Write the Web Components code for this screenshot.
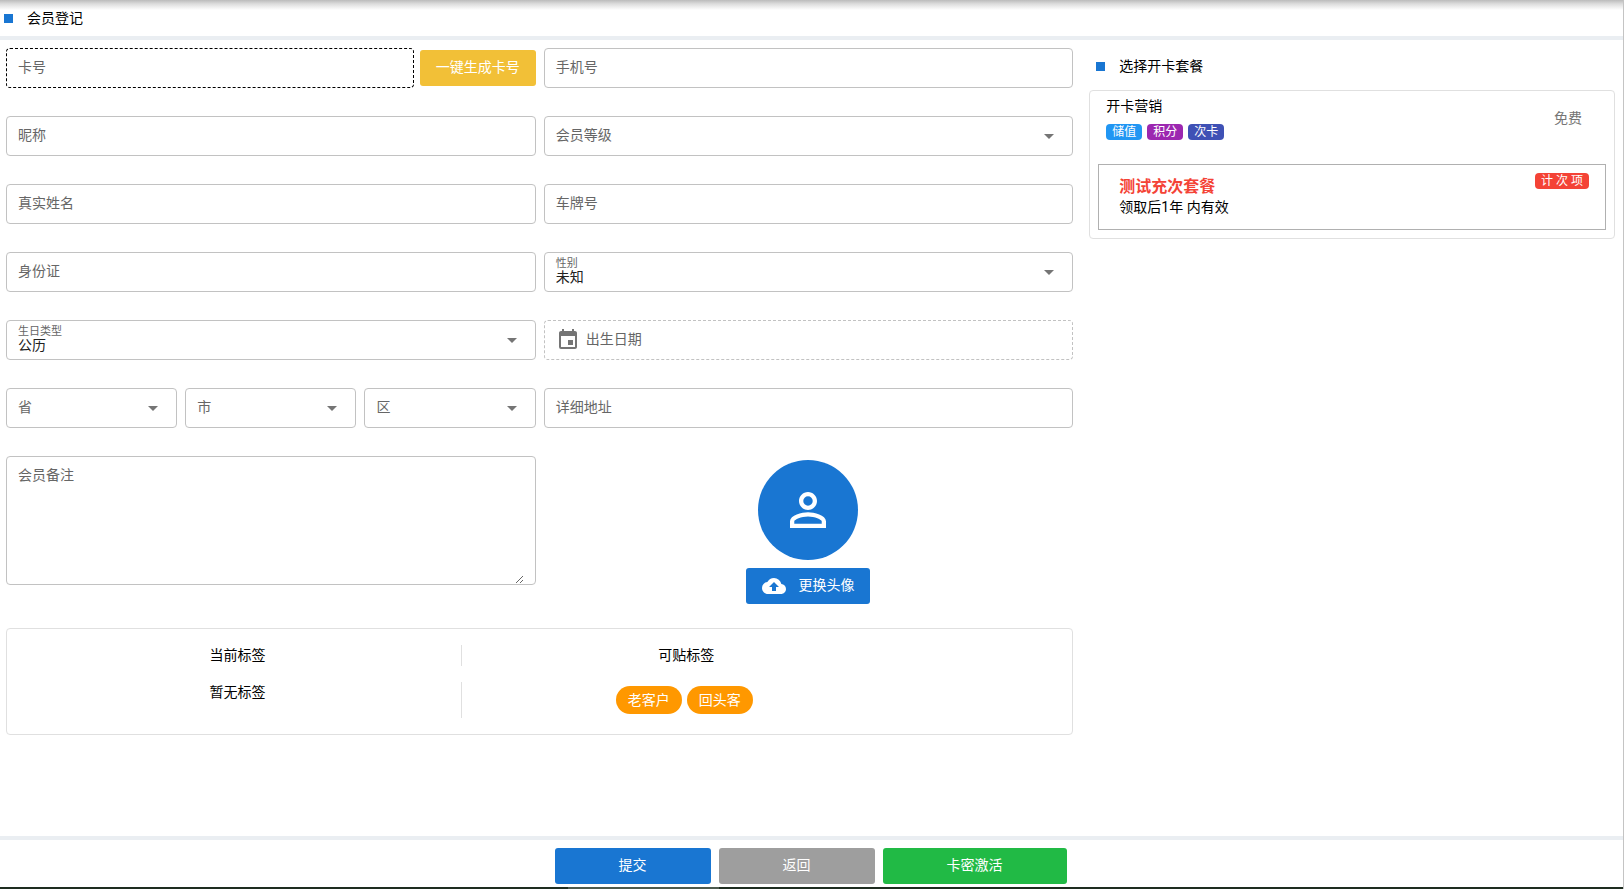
<!DOCTYPE html>
<html lang="zh-CN">
<head>
<meta charset="utf-8">
<meta name="viewport" content="width=device-width, initial-scale=1">
<title>会员登记</title>
<style>
  body { margin: 0; background: #fff; color: #000; font: 14px/20px Roboto, "Noto Sans CJK SC", sans-serif; }
</style>
</head>
<body>
<member-page></member-page>

<script>
const define = (name, markup, setup) => {
  const template = document.createElement('template');
  template.innerHTML = '<style>*, *::before, *::after { box-sizing: border-box; }</style>' + markup;
  customElements.define(name, class extends HTMLElement {
    constructor() {
      super();
      this.attachShadow({ mode: 'open' }).append(template.content.cloneNode(true));
    }
    connectedCallback() { if (setup) setup(this, this.shadowRoot); }
  });
};

// Shared look of the outlined fields
const fieldStyle = `
  :host { display: block; flex: 1; min-width: 0; }
  .box { display: grid; grid-template: minmax(38px, auto) / minmax(0, 1fr); border: 1px solid var(--field-border, #c2c2c2); border-style: var(--field-line, solid); border-radius: 4px; background: #fff; }
  .box > * { grid-area: 1 / 1; }
  label { align-self: start; padding: 8px 11px; color: #666; pointer-events: none; z-index: 1; }
  input, select, textarea { width: 100%; margin: 0; border: 0; outline: 0; background: none; color: #212121; font: inherit; border-radius: 4px; }
`;

define('section-title', `
  <style>
    :host { display: flex; align-items: center; gap: 14px; }
    h2 { margin: 0; font: inherit; }
    i { width: 9px; height: 9px; background: #1976d2; }
  </style>
  <i></i><h2><slot></slot></h2>`);

define('text-field', `
  <style>${fieldStyle}
    input { padding: 0 11px; }
  </style>
  <div class="box"><label for="c"><slot></slot></label><input id="c" type="text"></div>`);

define('date-field', `
  <style>${fieldStyle}
    :host { --field-line: dashed; }
    label { display: flex; align-items: center; gap: 6px; padding: 7px 11px; line-height: 24px; }
    span { line-height: 20px; padding-bottom: 2px; }
    svg { width: 24px; height: 24px; fill: #757575; }
    input { padding: 0 11px 0 41px; }
  </style>
  <div class="box">
    <label for="c"><svg viewBox="0 0 24 24"><path d="M17 12h-5v5h5v-5zM16 1v2H8V1H6v2H5c-1.11 0-1.99.9-1.99 2L3 19a2 2 0 0 0 2 2h14c1.1 0 2-.9 2-2V5c0-1.1-.9-2-2-2h-1V1h-2zm3 18H5V8h14v11z"/></svg><span><slot></slot></span></label>
    <input id="c" type="text">
  </div>`);

define('select-field', `
  <style>${fieldStyle}
    select { appearance: none; padding: 10px 36px 0 11px; }
    svg { width: 24px; height: 24px; fill: #757575; justify-self: end; align-self: center; margin-right: 11px; pointer-events: none; }
    :host([value]) label { padding: 4px 11px; font-size: 11px; line-height: 14px; }
  </style>
  <div class="box">
    <label for="c"><slot></slot></label>
    <select id="c"></select>
    <svg viewBox="0 0 24 24"><path d="M7 10l5 5 5-5z"/></svg>
  </div>`,
  (host, root) => {
    const value = host.getAttribute('value') || '';
    root.querySelector('select').replaceChildren(new Option(value, value));
  });

define('note-field', `
  <style>${fieldStyle}
    .box { grid-template-rows: 127px; }
    textarea { display: block; width: auto; height: 127px; margin-right: 11px; padding: 8px 0 8px 11px; resize: vertical; border-radius: 0; }
  </style>
  <div class="box"><label for="c"><slot></slot></label><textarea id="c"></textarea></div>`);

define('action-button', `
  <style>
    :host { display: block; }
    button { display: flex; align-items: center; justify-content: center; gap: 12px; width: 100%; height: 36px; margin: 0; padding: 0 16px; border: 0; border-radius: 3px; background: var(--tone, #1976d2); color: #fff; font: inherit; cursor: pointer; white-space: nowrap; }
    span { padding-bottom: 2px; }
  </style>
  <button type="button"><slot name="icon"></slot><span><slot></slot></span></button>`);

define('color-badge', `
  <style>
    :host { display: inline-block; padding: 0 6px; border-radius: 4px; background: var(--tone); color: #fff; font-size: 12px; line-height: 16px; white-space: nowrap; }
  </style>
  <slot></slot>`);

define('tag-chip', `
  <style>
    :host { display: block; }
    button { display: block; height: 28px; margin: 0; padding: 0 12px; border: 0; border-radius: 14px; background: #ff9800; color: #fff; font: inherit; cursor: pointer; }
  </style>
  <button type="button"><slot></slot></button>`);

define('member-avatar', `
  <style>
    :host { display: flex; flex-direction: column; align-items: center; gap: 8px; padding-top: 4px; }
    .face { display: grid; place-items: center; width: 100px; height: 100px; border-radius: 50%; background: #1976d2; }
    svg { fill: #fff; }
    .face svg { width: 54px; height: 54px; }
    .up { width: 24px; height: 24px; }
  </style>
  <div class="face"><svg viewBox="0 0 24 24"><path d="M12 5.9a2.1 2.1 0 1 1 0 4.2 2.1 2.1 0 0 1 0-4.2m0 9c2.97 0 6.1 1.46 6.1 2.1v1.1H5.9V17c0-.64 3.13-2.1 6.1-2.1M12 4C9.79 4 8 5.79 8 8s1.79 4 4 4 4-1.79 4-4-1.79-4-4-4zm0 9c-2.67 0-8 1.34-8 4v3h16v-3c0-2.66-5.33-4-8-4z"/></svg></div>
  <action-button>
    <svg class="up" slot="icon" viewBox="0 0 24 24"><path d="M19.35 10.04A7.49 7.49 0 0 0 12 4C9.11 4 6.6 5.64 5.35 8.04A5.994 5.994 0 0 0 0 14c0 3.31 2.69 6 6 6h13c2.76 0 5-2.24 5-5 0-2.64-2.05-4.78-4.65-4.96zM14 13v4h-4v-4H7l5-5 5 5h-3z"/></svg>更换头像</action-button>`);

define('tag-panel', `
  <style>
    :host { display: grid; grid-template-columns: 26fr 26fr 9fr; row-gap: 16px; padding: 16px 7px; border: 1px solid #e0e0e0; border-radius: 4px; text-align: center; }
    .left { grid-column: 1; border-right: 1px solid #e0e0e0; }
    .right { grid-column: 2; }
    .head { height: 21px; }
    .body { height: 36px; }
    .chips { display: flex; justify-content: center; gap: 5px; padding: 4px 4px 4px 0; }
  </style>
  <div class="left head">当前标签</div>
  <div class="right head">可贴标签</div>
  <div class="left body">暂无标签</div>
  <div class="right body chips"><tag-chip>老客户</tag-chip><tag-chip>回头客</tag-chip></div>`);

define('package-card', `
  <style>
    :host { display: block; padding: 5px 8px 8px; border: 1px solid #e0e0e0; border-radius: 4px; }
    .top { display: flex; justify-content: space-between; align-items: center; padding: 0 24px 0 8px; }
    .badges { display: flex; gap: 5px; padding-top: 8px; }
    .free { color: #757575; }
    .item { display: flex; justify-content: space-between; align-items: flex-start; margin-top: 24px; padding: 8px 16px 12px 20px; border: 1px solid #b0b0b0; }
    h3 { margin: 0; padding-top: 4px; color: #f44336; font-size: 16px; line-height: 20px; }
    p { margin: 0; }
  </style>
  <div class="top">
    <div>
      <div>开卡营销</div>
      <div class="badges">
        <color-badge style="--tone:#2196f3">储值</color-badge>
        <color-badge style="--tone:#9c27b0">积分</color-badge>
        <color-badge style="--tone:#3f51b5">次卡</color-badge>
      </div>
    </div>
    <div class="free">免费</div>
  </div>
  <div class="item">
    <div><h3>测试充次套餐</h3><p>领取后1年 内有效</p></div>
    <color-badge style="--tone:#f44336">计 次 项</color-badge>
  </div>`);

define('member-page', `
  <style>
    :host { display: flex; flex-direction: column; min-height: 100vh; border-right: 1px solid #c4c4c4; }
    header { height: 40px; padding: 8px 4px; border-bottom: 4px solid #eaeef2; background: linear-gradient(#bbb, #ddd 4px, #fff 10px); }
    main { flex: 1; display: grid; grid-template-columns: 67fr 33fr; gap: 16px; align-items: start; padding: 8px 8px 8px 6px; }
    form { display: grid; grid-template-columns: repeat(2, minmax(0, 1fr)); gap: 28px 8px; }
    .row { display: flex; gap: 8px; }
    .card { gap: 6px; align-items: center; }
    .card text-field { --field-border: #000; --field-line: dashed; }
    member-avatar { margin-bottom: -4px; }
    tag-panel { grid-column: 1 / -1; }
    aside section-title { height: 36px; padding-left: 7px; margin-bottom: 6px; }
    footer { display: flex; justify-content: center; gap: 8px; padding: 8px 10px 3px 8px; border-top: 4px solid #eaeef2; }
    footer action-button { width: 156px; }
    footer action-button:last-child { width: 184px; }
    .edge { display: grid; grid-template-columns: 35% 151px 1fr; height: 2px; background: #1e2d20; }
    .edge i { grid-column: 2; background: #4c5a4e; }
  </style>
  <header><section-title>会员登记</section-title></header>
  <main>
    <form>
      <div class="row card"><text-field>卡号</text-field><action-button style="--tone:#f2c037">一键生成卡号</action-button></div>
      <text-field>手机号</text-field>
      <text-field>昵称</text-field>
      <select-field>会员等级</select-field>
      <text-field>真实姓名</text-field>
      <text-field>车牌号</text-field>
      <text-field>身份证</text-field>
      <select-field value="未知">性别</select-field>
      <select-field value="公历">生日类型</select-field>
      <date-field>出生日期</date-field>
      <div class="row"><select-field>省</select-field><select-field>市</select-field><select-field>区</select-field></div>
      <text-field>详细地址</text-field>
      <note-field>会员备注</note-field>
      <member-avatar></member-avatar>
      <tag-panel></tag-panel>
    </form>
    <aside>
      <section-title>选择开卡套餐</section-title>
      <package-card></package-card>
    </aside>
  </main>
  <footer>
    <action-button>提交</action-button>
    <action-button style="--tone:#9e9e9e">返回</action-button>
    <action-button style="--tone:#21ba45">卡密激活</action-button>
  </footer>
  <div class="edge"><i></i></div>`);
</script>
</body>
</html>
